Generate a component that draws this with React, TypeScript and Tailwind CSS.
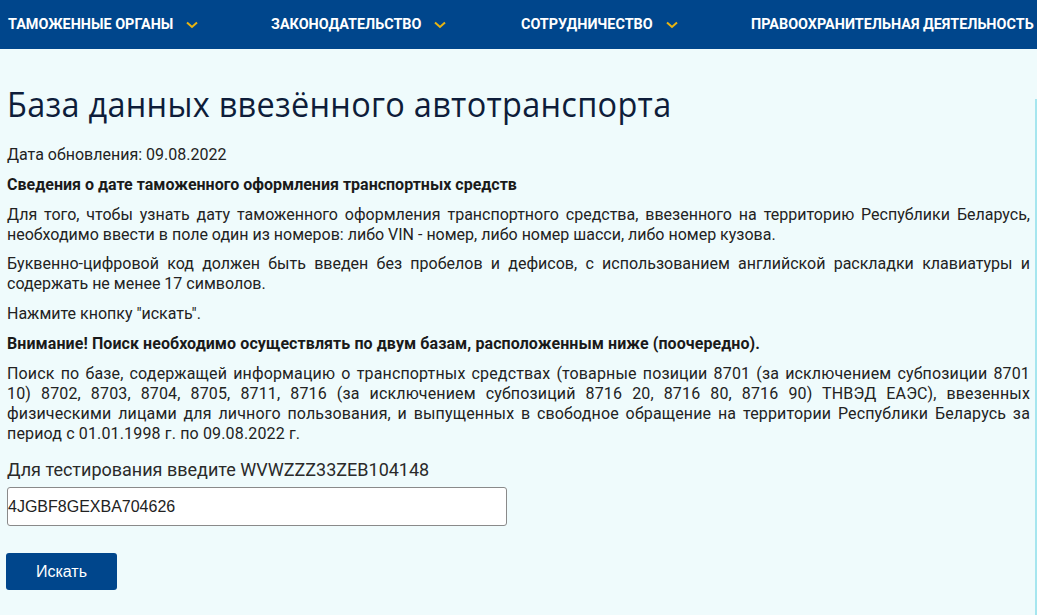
import React from "react";

const navItems = [
  { label: "ТАМОЖЕННЫЕ ОРГАНЫ", width: "w-[263px]", chevron: true },
  { label: "ЗАКОНОДАТЕЛЬСТВО", width: "w-[250px]", chevron: true },
  { label: "СОТРУДНИЧЕСТВО", width: "w-[230px]", chevron: true },
  { label: "ПРАВООХРАНИТЕЛЬНАЯ ДЕЯТЕЛЬНОСТЬ", width: "", chevron: false },
];

function Chevron() {
  return (
    <svg width="12" height="8" viewBox="0 0 12 8" className="ml-[13px] mt-[1px]">
      <path d="M1 1.5 L6 6 L11 1.5" fill="none" stroke="#e8b410" strokeWidth="2" />
    </svg>
  );
}

export default function App() {
  return (
    <div className="relative w-[1037px] h-[615px] overflow-hidden bg-[#effbfc] font-['Roboto',sans-serif]">
      <nav className="h-[49px] bg-[#00468c] flex items-center pl-[8px] pt-[1px]">
        {navItems.map((item) => (
          <div key={item.label} className={`flex items-center ${item.width}`}>
            <span className="text-white font-bold text-[14.4px] whitespace-nowrap">{item.label}</span>
            {item.chevron && <Chevron />}
          </div>
        ))}
      </nav>

      <main className="px-[7px] text-[#222]">
        <h1 className="mt-[35px] text-[35px] leading-[40px] text-[#0e1d3a] font-['Open_Sans',sans-serif] tracking-[0.3px] scale-x-[0.928] origin-left whitespace-nowrap">
          База данных ввезённого автотранспорта
        </h1>

        <p className="mt-[21px] text-[16px] leading-[20px]">Дата обновления: 09.08.2022</p>
        <p className="mt-[10px] text-[16px] leading-[20px] font-bold text-[#1a1a1a]">
          Сведения о дате таможенного оформления транспортных средств
        </p>
        <p className="mt-[10px] text-[16px] leading-[20px] text-justify">
          Для того, чтобы узнать дату таможенного оформления транспортного средства, ввезенного на территорию Республики Беларусь, необходимо ввести в поле один из номеров: либо VIN - номер, либо номер шасси, либо номер кузова.
        </p>
        <p className="mt-[9px] text-[16px] leading-[20px] text-justify">
          Буквенно-цифровой код должен быть введен без пробелов и дефисов, с использованием английской раскладки клавиатуры и содержать не менее 17 символов.
        </p>
        <p className="mt-[10px] text-[16px] leading-[20px]">Нажмите кнопку "искать".</p>
        <p className="mt-[10px] text-[16px] leading-[20px] font-bold text-[#1a1a1a] tracking-[0.08px]">
          Внимание! Поиск необходимо осуществлять по двум базам, расположенным ниже (поочередно).
        </p>
        <p className="mt-[10px] text-[16px] leading-[20px] text-justify tracking-[0.15px]">
          Поиск по базе, содержащей информацию о транспортных средствах (товарные позиции 8701 (за исключением субпозиции 8701 10) 8702, 8703, 8704, 8705, 8711, 8716 (за исключением субпозиций 8716 20, 8716 80, 8716 90) ТНВЭД ЕАЭС), ввезенных физическими лицами для личного пользования, и выпущенных в свободное обращение на территории Республики Беларусь за период с 01.01.1998 г. по 09.08.2022 г.
        </p>

        <label className="block mt-[15px] text-[18px] leading-[22px] text-[#2a2a2a]">
          Для тестирования введите WVWZZZ33ZEB104148
        </label>
        <input
          type="text"
          defaultValue="4JGBF8GEXBA704626"
          className="block mt-[6px] w-[500px] h-[39px] bg-white border border-[#8a8a8a] rounded-[3px] px-0 text-[16px] text-[#222] font-['Liberation_Sans',sans-serif] outline-none"
        />

        <button className="block mt-[27px] -ml-[1px] w-[111px] h-[37px] bg-[#00468c] rounded-[3px] text-white text-[16px] font-['Liberation_Sans',sans-serif]">
          Искать
        </button>
      </main>

      <div className="absolute right-0 top-[99px] bottom-0 w-[2px] bg-[#a6e6ef]" />
    </div>
  );
}
